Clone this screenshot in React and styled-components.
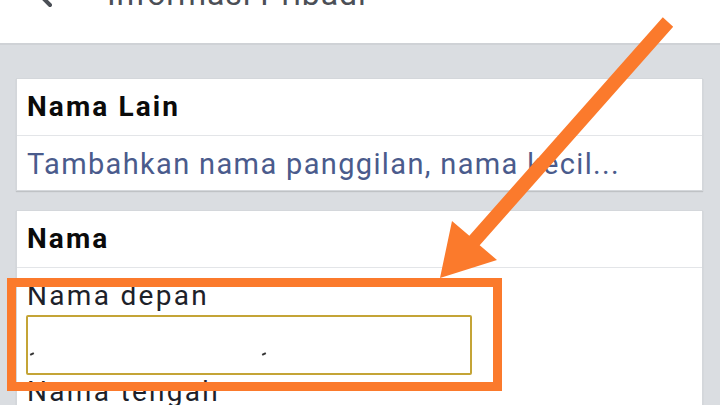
import React from 'react';
import styled, { createGlobalStyle } from 'styled-components';

const GlobalStyle = createGlobalStyle`
  html, body {
    margin: 0;
    padding: 0;
    background: #dadde1;
    overflow: hidden;
  }
  body {
    font-family: Roboto, 'Noto Sans', sans-serif;
  }
`;

const Page = styled.div`
  position: relative;
  width: 720px;
  height: 405px;
  overflow: hidden;
  background: #dadde1;
`;

const Header = styled.header`
  height: 43px;
  background: #ffffff;
  border-bottom: 2px solid #cfd2d6;
  overflow: hidden;
`;

const HeaderRow = styled.div`
  display: flex;
  align-items: center;
  height: 42px;
  margin-top: -27px;
  padding-left: 33px;
  gap: 34px;
`;

const Title = styled.h1`
  margin: 0;
  font-size: 32px;
  line-height: 42px;
  font-weight: 400;
  letter-spacing: 0.9px;
  color: #4b4f56;
  white-space: nowrap;
`;

const Content = styled.main`
  display: flex;
  flex-direction: column;
  gap: 19px;
  padding: 33px 17px 0 16px;
`;

const Card = styled.section`
  background: #ffffff;
  border: 1px solid #d4d7db;
  box-shadow: 0 1px 1px rgba(0, 0, 0, 0.12);
`;

const CardTitle = styled.div`
  padding: 12px 10px;
  font-size: 28px;
  line-height: 32px;
  font-weight: 700;
  letter-spacing: 2.1px;
  color: #0b0b0b;
  border-bottom: 1px solid #e3e5e8;
`;

const LinkRow = styled.div`
  padding: 12px 10px 10px 10px;
  font-size: 29px;
  line-height: 32px;
  letter-spacing: 1.35px;
  color: #4a5b8c;
  white-space: nowrap;
`;

const Fields = styled.div`
  display: flex;
  flex-direction: column;
  padding: 12px 10px 20px 9px;
`;

const Label = styled.label`
  display: block;
  font-size: 28px;
  line-height: 32px;
  letter-spacing: 2.3px;
  color: #1d2129;
  padding-left: 1px;
  margin-top: ${({ $gap }) => $gap || 0}px;
`;

const InputBox = styled.div`
  position: relative;
  box-sizing: border-box;
  width: 446px;
  height: 60px;
  margin-top: 3px;
  border: 2px solid #c4a436;
  border-radius: 2px;
  background: #ffffff;
`;

const Tick = styled.span`
  position: absolute;
  top: 36px;
  left: ${({ $x }) => $x}px;
  width: 4px;
  height: 2px;
  background: #333;
  transform: rotate(-25deg);
`;

const Highlight = styled.div`
  position: absolute;
  left: 7px;
  top: 278px;
  width: 495px;
  height: 113px;
  box-sizing: border-box;
  border: 9px solid #fb7a2c;
  pointer-events: none;
`;

const ArrowLayer = styled.svg`
  position: absolute;
  left: 0;
  top: 0;
  pointer-events: none;
`;

const BackIcon = () => (
  <svg width="40" height="40" viewBox="0 0 40 40">
    <path
      d="M38 20H6M6 20L17 9M6 20L17 31"
      stroke="#4b4f56"
      strokeWidth="4"
      strokeLinecap="round"
      fill="none"
    />
  </svg>
);

const App = () => (
  <Page>
    <GlobalStyle />
    <Header>
      <HeaderRow>
        <BackIcon />
        <Title>Informasi Pribadi</Title>
      </HeaderRow>
    </Header>
    <Content>
      <Card>
        <CardTitle>Nama Lain</CardTitle>
        <LinkRow>Tambahkan nama panggilan, nama kecil...</LinkRow>
      </Card>
      <Card>
        <CardTitle>Nama</CardTitle>
        <Fields>
          <Label>Nama depan</Label>
          <InputBox>
            <Tick $x={2} />
            <Tick $x={234} />
          </InputBox>
          <Label $gap={1}>Nama tengah</Label>
        </Fields>
      </Card>
    </Content>
    <Highlight />
    <ArrowLayer width="720" height="405" viewBox="0 0 720 405">
      <polygon
        points="662.8,17.3 673.2,26.7 479.7,245.2 497,260 440,278 452,221 469.3,235.8"
        fill="#fb7a2c"
        strokeLinejoin="round"
      />
    </ArrowLayer>
  </Page>
);

export default App;
